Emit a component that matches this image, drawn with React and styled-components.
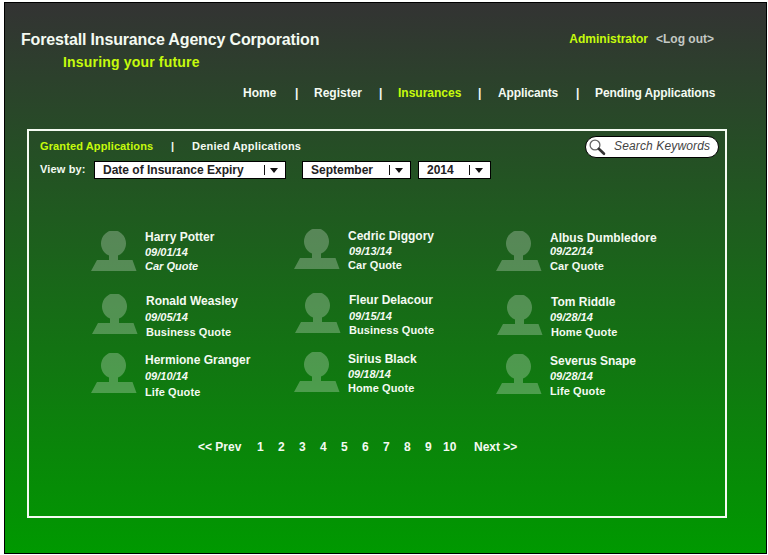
import React from "react";
import styled, { createGlobalStyle } from "styled-components";

const GlobalStyle = createGlobalStyle`
  * { box-sizing: border-box; }
  body {
    margin: 0;
    background: #fff;
    font-family: "Liberation Sans", Arial, sans-serif;
    font-weight: bold;
    font-size: 12px;
    line-height: 14px;
    color: #f4faf2;
    white-space: nowrap;
    overflow: hidden;
  }
`;

const LIME = "#c6fb0c";

const Page = styled.main`
  width: 763px;
  height: 552px;
  margin: 2px 0 0 4px;
  border: 1px solid #000;
  background: linear-gradient(#333333, #009900);
`;

const Header = styled.header`
  display: flex;
  justify-content: space-between;
  height: 83px;
  padding: 27px 52px 0 16px;
`;

const Title = styled.h1`
  margin: 0;
  font-size: 16px;
  line-height: 20px;
  letter-spacing: -0.16px;
`;

const Tagline = styled.p`
  margin: 4px 0 0 42px;
  font-size: 14px;
  line-height: 16px;
  letter-spacing: 0.18px;
  color: ${LIME};
`;

const Account = styled.div`
  display: flex;
  gap: 8px;
  padding-top: 2px;
`;

const AccountName = styled.span`
  color: ${LIME};
`;

const LogOut = styled.a`
  color: #c4c8c4;
`;

const Nav = styled.nav`
  display: flex;
  padding-left: 238px;
`;

const NavItem = styled.a`
  width: ${(p) => p.$width}px;
  letter-spacing: ${(p) => p.$spacing || 0}px;
  color: ${(p) => (p.$active ? LIME : "inherit")};
`;

const Divider = styled.span`
  width: ${(p) => p.$width}px;
`;

const Panel = styled.section`
  width: 700px;
  height: 389px;
  margin: 29px 0 0 22px;
  border: 2px solid #f4fbf2;
`;

const Toolbar = styled.div`
  display: flex;
  justify-content: space-between;
  height: 95px;
  padding: 5px 6px 0 11px;
`;

const Tabs = styled.div`
  display: flex;
  padding-top: 4px;
  font-size: 11px;
  line-height: 13px;
`;

const Filters = styled.div`
  display: flex;
  margin-top: 8px;
`;

const FilterLabel = styled.label`
  width: 54px;
  padding-top: 2px;
  font-size: 11px;
  line-height: 13px;
  letter-spacing: 0.15px;
`;

const Select = styled.div`
  display: flex;
  justify-content: space-between;
  width: ${(p) => p.$width}px;
  height: 18px;
  margin-right: ${(p) => p.$after || 0}px;
  padding: 1px 7px 0 8px;
  border: 1px solid #000;
  background: #fff;
  color: #222;
`;

const Arrow = styled.svg`
  width: 14px;
  height: 10px;
  margin-top: 2px;
`;

const Search = styled.div`
  display: flex;
  width: 134px;
  height: 22px;
  padding: 2px 0 0 3px;
  border: 1px solid #000;
  border-radius: 11px;
  background: #fff;
  color: #444;
  font-weight: normal;
  font-style: italic;
  letter-spacing: 0.14px;
`;

const SearchIcon = styled.svg`
  width: 17px;
  height: 17px;
  margin-right: 8px;
`;

const People = styled.div`
  display: grid;
  grid-template-columns: 203px 202px 180px;
  grid-template-rows: 64px 59px 91px;
  padding-left: 62px;
`;

const Person = styled.article`
  display: flex;
  align-items: flex-start;
  padding: ${(p) => p.$top}px 0 0 ${(p) => p.$left}px;
`;

const Avatar = styled.svg`
  flex: none;
  width: 46px;
  height: 40px;
  margin: ${(p) => p.$drop}px 8px 0 0;
  fill: #fff;
  fill-opacity: 0.26;
`;

const Name = styled.div`
  height: 14px;
`;

const Detail = styled.div`
  margin: ${(p) => p.$gap}px 0 0 ${(p) => p.$shift || 0}px;
  font-size: 11px;
  line-height: 13px;
  font-style: ${(p) => (p.$italic ? "italic" : "normal")};
  letter-spacing: ${(p) => (p.$italic ? 0 : 0.1)}px;
`;

const Pager = styled.div`
  display: flex;
  padding-left: 169px;
`;

const PageLink = styled.a`
  width: ${(p) => p.$width}px;
`;

const people = [
  { name: "Harry Potter", date: "09/01/14", quote: "Car Quote", top: 4, left: 0, drop: 1, gaps: [2, 1], shift: 0, italic: true },
  { name: "Cedric Diggory", date: "09/13/14", quote: "Car Quote", top: 3, left: 0, drop: 0, gaps: [2, 1], shift: 1 },
  { name: "Albus Dumbledore", date: "09/22/14", quote: "Car Quote", top: 5, left: 0, drop: 0, gaps: [0, 2], shift: 0 },
  { name: "Ronald Weasley", date: "09/05/14", quote: "Business Quote", top: 4, left: 1, drop: 0, gaps: [3, 2], shift: -1 },
  { name: "Fleur Delacour", date: "09/15/14", quote: "Business Quote", top: 3, left: 1, drop: 0, gaps: [3, 1], shift: 0 },
  { name: "Tom Riddle", date: "09/28/14", quote: "Home Quote", top: 5, left: 1, drop: 0, gaps: [2, 2], shift: -1 },
  { name: "Hermione Granger", date: "09/10/14", quote: "Life Quote", top: 4, left: 0, drop: 0, gaps: [3, 3], shift: 0 },
  { name: "Sirius Black", date: "09/18/14", quote: "Home Quote", top: 3, left: 0, drop: 0, gaps: [2, 1], shift: 0 },
  { name: "Severus Snape", date: "09/28/14", quote: "Life Quote", top: 5, left: 0, drop: 0, gaps: [2, 2], shift: 0 },
];

const Dropdown = ({ children, ...rest }) => (
  <Select {...rest}>
    {children}
    <Arrow viewBox="0 0 14 10">
      <path d="M0 0h1v10H0zM6 3h8l-4 5z" fill="#111" />
    </Arrow>
  </Select>
);

export default function App() {
  return (
    <>
      <GlobalStyle />
      <Page>
        <Header>
          <div>
            <Title>Forestall Insurance Agency Corporation</Title>
            <Tagline>Insuring your future</Tagline>
          </div>
          <Account>
            <AccountName>Administrator</AccountName>
            <LogOut>&lt;Log out&gt;</LogOut>
          </Account>
        </Header>
        <Nav>
          <NavItem $width={52}>Home</NavItem>
          <Divider $width={19}>|</Divider>
          <NavItem $width={65}>Register</NavItem>
          <Divider $width={19}>|</Divider>
          <NavItem $width={80} $active>Insurances</NavItem>
          <Divider $width={20}>|</Divider>
          <NavItem $width={78} $spacing={-0.12}>Applicants</NavItem>
          <Divider $width={19}>|</Divider>
          <NavItem $width={122} $spacing={-0.09}>Pending Applications</NavItem>
        </Nav>
        <Panel>
          <Toolbar>
            <div>
              <Tabs>
                <NavItem $width={131} $spacing={0.12} $active>Granted Applications</NavItem>
                <Divider $width={21}>|</Divider>
                <NavItem $width={110} $spacing={0.2}>Denied Applications</NavItem>
              </Tabs>
              <Filters>
                <FilterLabel>View by:</FilterLabel>
                <Dropdown $width={192} $after={16}>Date of Insurance Expiry</Dropdown>
                <Dropdown $width={109} $after={7}>September</Dropdown>
                <Dropdown $width={73}>2014</Dropdown>
              </Filters>
            </div>
            <Search>
              <SearchIcon viewBox="0 0 17 17" fill="none">
                <circle cx="6" cy="6" r="4.9" stroke="#666" strokeWidth="1.3" />
                <path d="M9.8 9.8l5.2 5" stroke="#333" strokeWidth="2.6" strokeLinecap="round" />
              </SearchIcon>
              Search Keywords
            </Search>
          </Toolbar>
          <People>
            {people.map((p) => (
              <Person key={p.name} $top={p.top} $left={p.left}>
                <Avatar viewBox="0 0 46 40" $drop={p.drop}>
                  <path d="M0 40L6 29H18V24.5A12.5 13 0 1 1 27 24.5V29H41.5L45.5 40Z" />
                </Avatar>
                <div>
                  <Name>{p.name}</Name>
                  <Detail $gap={p.gaps[0]} $shift={p.shift} $italic>{p.date}</Detail>
                  <Detail $gap={p.gaps[1]} $italic={p.italic}>{p.quote}</Detail>
                </div>
              </Person>
            ))}
          </People>
          <Pager>
            <PageLink $width={59}>&lt;&lt; Prev</PageLink>
            {[1, 2, 3, 4, 5, 6, 7, 8].map((n) => (
              <PageLink key={n} $width={21}>{n}</PageLink>
            ))}
            <PageLink $width={18}>9</PageLink>
            <PageLink $width={31}>10</PageLink>
            <PageLink $width={44}>Next &gt;&gt;</PageLink>
          </Pager>
        </Panel>
      </Page>
    </>
  );
}
